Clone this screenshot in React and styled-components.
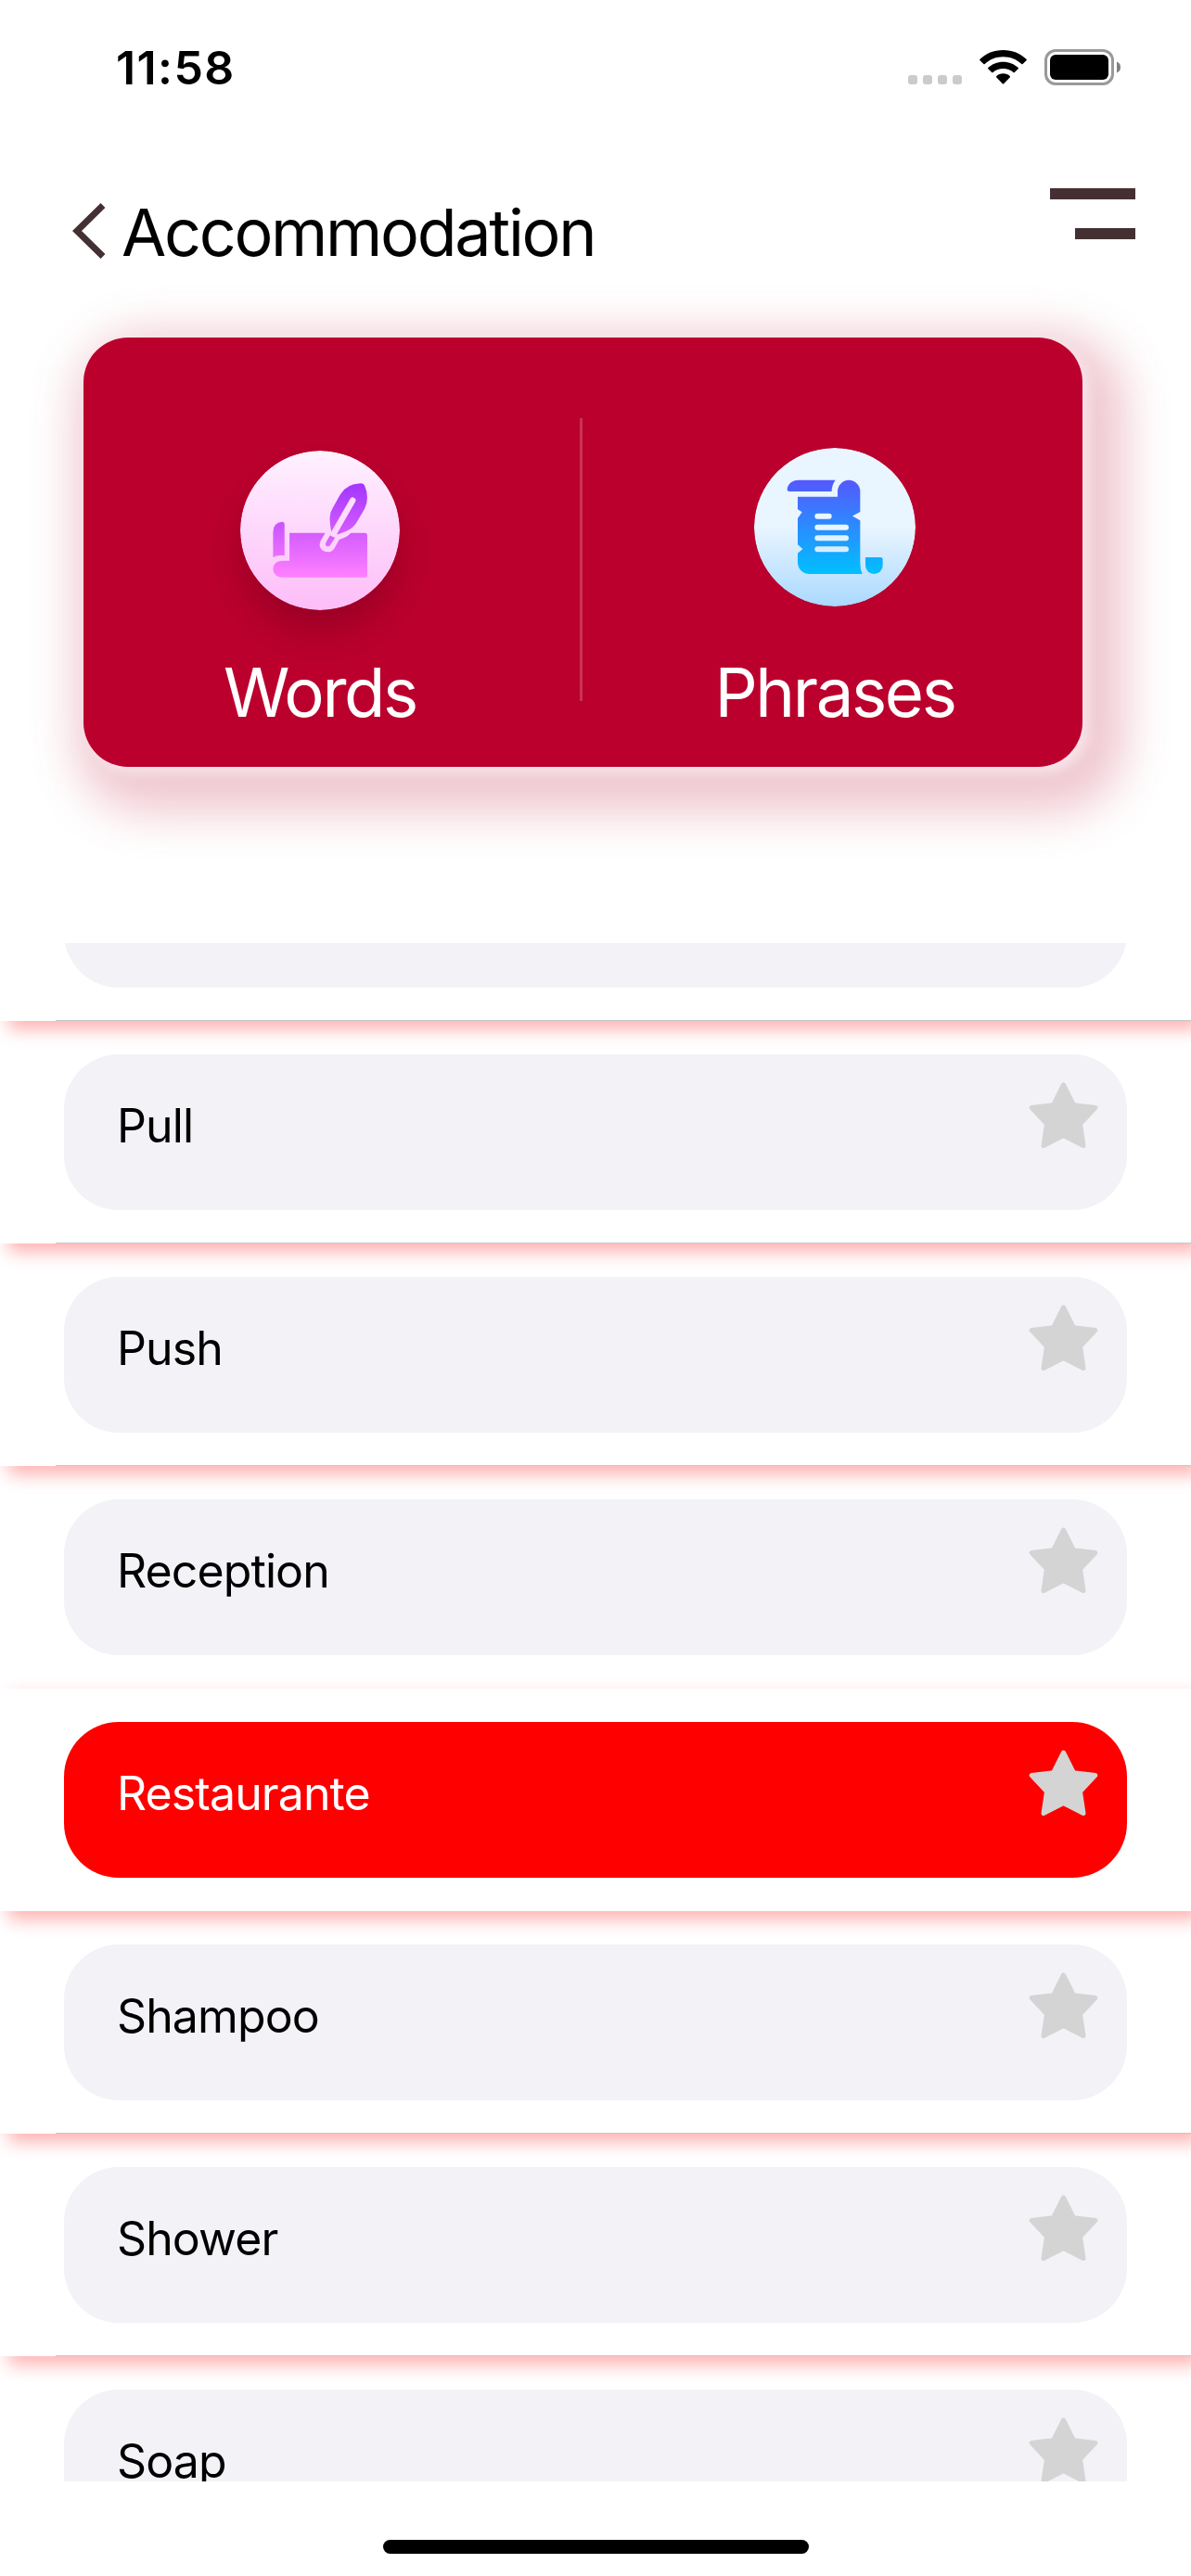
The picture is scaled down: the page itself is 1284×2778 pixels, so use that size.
import React from "react";
import styled, { createGlobalStyle } from "styled-components";

const GlobalStyle = createGlobalStyle`
  * { box-sizing: border-box; }
  body { margin: 0; background: #fff; }
`;

const Screen = styled.main`
  width: 1284px;
  height: 2778px;
  display: flex;
  flex-direction: column;
  overflow: hidden;
  background: #fff;
  color: #000;
  font-family: Inter, "Liberation Sans", sans-serif;
`;

const StatusBar = styled.header`
  height: 141px;
  display: flex;
  justify-content: space-between;
  align-items: flex-start;
  padding: 53px 76px 0 125px;
`;

const Clock = styled.time`
  font-size: 50px;
  font-weight: 600;
  line-height: 40px;
  letter-spacing: 1.4px;
`;

const StatusIcons = styled.div`
  display: flex;
  align-items: flex-start;
`;

const SignalDots = styled.div`
  display: flex;
  gap: 6px;
  padding-top: 28px;
  margin-right: 19px;
`;

const Dot = styled.span`
  width: 10px;
  height: 10px;
  border-radius: 3px;
  background: #cbcbcb;
`;

const WifiIcon = styled.svg`
  width: 51px;
  height: 38px;
  margin-right: 19px;
`;

const BatteryIcon = styled.svg`
  width: 82px;
  height: 39px;
`;

const NavBar = styled.nav`
  height: 223px;
  display: flex;
  align-items: flex-start;
  justify-content: space-between;
  padding: 61px 60px 0 78px;
`;

const BackButton = styled.button`
  display: flex;
  align-items: flex-start;
  gap: 17px;
  padding: 0;
  border: 0;
  background: none;
  color: inherit;
  font: inherit;
`;

const Chevron = styled.svg`
  width: 36px;
  height: 60px;
  margin-top: 17px;
`;

const Title = styled.span`
  font-size: 70px;
  line-height: 98px;
  letter-spacing: -2.3px;
`;

const MenuButton = styled.button`
  display: flex;
  flex-direction: column;
  align-items: flex-end;
  gap: 31px;
  padding: 1px 0 0;
  border: 0;
  background: none;
`;

const MenuBar = styled.span`
  width: ${(p) => p.$width}px;
  height: 12px;
  background: #443032;
`;

const SwitchCard = styled.section`
  width: 1077px;
  height: 463px;
  margin-left: 90px;
  flex-shrink: 0;
  display: flex;
  border-radius: 48px;
  background: #bb002d;
  box-shadow:
    7px 7px 14px rgba(255, 255, 255, 0.55),
    19px 22px 52px 26px rgba(187, 0, 45, 0.23);
`;

const Tile = styled.div`
  width: ${(p) => p.$width}px;
  padding-top: ${(p) => p.$top}px;
  display: flex;
  flex-direction: column;
  align-items: center;
`;

const TileIcon = styled.svg`
  width: ${(p) => p.$w}px;
  height: ${(p) => p.$h}px;
  border-radius: 50%;
  box-shadow: ${(p) => (p.$raised ? "0 24px 44px -4px rgba(0, 0, 0, 0.2)" : "none")};
`;

const TileLabel = styled.span`
  margin-top: ${(p) => p.$gap}px;
  font-size: 72.5px;
  line-height: 80px;
  letter-spacing: -2.4px;
  color: #fff;
`;

const Divider = styled.span`
  width: 3px;
  height: 305px;
  margin: 87px 7px 0 25px;
  background: rgba(255, 255, 255, 0.2);
`;

const ListViewport = styled.section`
  height: 1659px;
  margin-top: 190px;
  flex-shrink: 0;
  overflow: hidden;
`;

const List = styled.ul`
  list-style: none;
  margin: -156px 0 0;
  padding: 0;
  display: flex;
  flex-direction: column;
  isolation: isolate;
`;

const Row = styled.li`
  position: relative;
  z-index: ${(p) => p.$layer};
  height: 240px;
  flex-shrink: 0;
  padding: 36px 69px;
  background-color: #fff;
  background-image: ${(p) =>
    p.$separator ? "linear-gradient(#c6c6c8, #c6c6c8)" : "none"};
  background-repeat: no-repeat;
  background-position: 60px 239px;
  background-size: 1224px 1px;
  box-shadow: 9px 9px 18px rgba(255, 0, 0, 0.31);
`;

const Pill = styled.div`
  height: 168px;
  display: flex;
  justify-content: space-between;
  align-items: flex-start;
  padding: 30px 31.5px 0 57px;
  border-radius: 59px;
  background: ${(p) => (p.$selected ? "#ff0000" : "#f2f2f7")};
  color: ${(p) => (p.$selected ? "#fff" : "#000")};
`;

const Word = styled.span`
  margin-top: 17px;
  font-size: 50px;
  line-height: 60px;
  letter-spacing: -0.9px;
`;

const StarIcon = styled.svg`
  width: 75px;
  height: 72px;
`;

const HomeArea = styled.footer`
  flex: 1;
  display: flex;
  justify-content: center;
  padding-top: 63px;
`;

const HomeIndicator = styled.span`
  width: 459px;
  height: 15px;
  border-radius: 8px;
  background: #000;
`;

function Wifi() {
  return (
    <WifiIcon viewBox="0 0 51 38">
      <path d="M25.5 1C35.5 1 44.200 4.700 50.500 10.800Q51.200 11.500 50.500 12.200L46.600 16Q46 16.600 45.300 16C40 11 33 8.300 25.500 8.300S11 11 5.700 16Q5 16.600 4.400 16L.5 12.200Q-.2 11.500 .5 10.800C6.800 4.700 15.500 1 25.500 1Z" />
      <path d="M25.500 13.700C32 13.700 37.500 16 41.700 20Q42.300 20.700 41.700 21.300L37.800 25.100Q37.200 25.700 36.500 25.100C33.500 22.500 29.700 21 25.500 21S17.500 22.500 14.500 25.100Q13.800 25.700 13.200 25.100L9.300 21.300Q8.700 20.700 9.300 20C13.500 16 19 13.700 25.500 13.700Z" />
      <path d="M25.500 26.300C28.400 26.300 30.800 27.300 32.700 29Q33.300 29.700 32.700 30.400L26.200 37.200Q25.500 37.900 24.800 37.200L18.300 30.400Q17.700 29.700 18.300 29C20.200 27.300 22.600 26.300 25.500 26.300Z" />
    </WifiIcon>
  );
}

function Battery() {
  return (
    <BatteryIcon viewBox="0 0 82 39">
      <rect x="1.500" y="1.500" width="72" height="36" rx="10.500" fill="none" stroke="#999" strokeWidth="3" />
      <rect x="6" y="6" width="63" height="27" rx="6" />
      <path d="M78 13.500Q82 15 82 19.500T78 25.500Z" fill="#808080" />
    </BatteryIcon>
  );
}

function QuillIcon() {
  return (
    <TileIcon $w={172} $h={172} $raised viewBox="57 47 515 516" preserveAspectRatio="none">
      <defs>
        <linearGradient id="quillBg" x1="0" y1="0" x2="0" y2="1">
          <stop offset="0" stopColor="#fff1ff" />
          <stop offset="1" stopColor="#fdbdf8" />
        </linearGradient>
        <linearGradient id="quillInk" gradientUnits="userSpaceOnUse" x1="0" y1="153" x2="0" y2="457">
          <stop offset="0" stopColor="#a335ff" />
          <stop offset="1" stopColor="#ff80ff" />
        </linearGradient>
        <mask id="paperCut" maskUnits="userSpaceOnUse" x="57" y="47" width="515" height="516">
          <rect x="57" y="47" width="515" height="516" fill="#fff" />
          <path d="M336 305L317 338C306 358 322 375 340 375Q354 375 362 361L376 336Q382 332 394 328Q408 323 420 305Z" fill="#000" />
        </mask>
        <mask id="shaftCut" maskUnits="userSpaceOnUse" x="57" y="47" width="515" height="516">
          <rect x="57" y="47" width="515" height="516" fill="#fff" />
          <path d="M420 208L357 318" stroke="#000" strokeWidth="19" strokeLinecap="round" />
        </mask>
      </defs>
      <ellipse cx="314.500" cy="305" rx="257.500" ry="258" fill="url(#quillBg)" />
      <g fill="url(#quillInk)">
        <path d="M200 285Q200 277 192 277Q163 280 163 310V392Q172 386 186 386H200Z" />
        <path
          mask="url(#paperCut)"
          d="M216 313H459Q467 313 467 321V449Q467 457 459 457H190A27 27 0 0 1 190 403H216Z"
        />
        <path
          mask="url(#shaftCut)"
          d="M445 153Q454 152 458 159Q467 178 467 200Q467 220 458 236L433 279Q421 299 400 307L373 318L352 313Q346 285 346 266Q346 248 355 234L379 190Q400 154 445 153Z"
        />
        <path d="M347 321L334 343C330 352 334 357 340 357Q345 357 348 352L363 328Q354 327 347 321Z" />
      </g>
    </TileIcon>
  );
}

function ScrollIcon() {
  return (
    <TileIcon $w={174} $h={171} viewBox="69 69 522 513" preserveAspectRatio="none">
      <defs>
        <linearGradient id="scrollBg" x1="0" y1="0" x2="0" y2="1">
          <stop offset="0" stopColor="#e9f5ff" />
          <stop offset="0.5" stopColor="#e9f5ff" />
          <stop offset="1" stopColor="#aad9ff" />
        </linearGradient>
        <linearGradient id="scrollInk" gradientUnits="userSpaceOnUse" x1="0" y1="173" x2="0" y2="477">
          <stop offset="0" stopColor="#5558ff" />
          <stop offset="1" stopColor="#00c0ff" />
        </linearGradient>
        <mask id="linesCut" maskUnits="userSpaceOnUse" x="69" y="69" width="522" height="513">
          <rect x="69" y="69" width="522" height="513" fill="#fff" />
          <rect x="265" y="281" width="55" height="18" rx="9" />
          <rect x="265" y="317" width="110" height="18" rx="9" />
          <rect x="265" y="352" width="110" height="18" rx="9" />
          <rect x="265" y="388" width="110" height="18" rx="9" />
        </mask>
      </defs>
      <ellipse cx="330" cy="325.500" rx="261" ry="256.500" fill="url(#scrollBg)" />
      <g fill="url(#scrollInk)">
        <path d="M212 173H332Q320 188 320 210H183Q176 210 176 202C178 186 192 173 212 173Z" />
        <path
          mask="url(#linesCut)"
          d="M339 227V210A36.500 36.500 0 0 1 412 210V276L387 289.500L412 304V440Q412 462 419 477H248A38 38 0 0 1 210 440V410L226 396L210 382V297L224 277L210 268V227Z"
        />
        <path d="M429 423H478Q485 423 485 430V449A28 28 0 0 1 429 449Z" />
      </g>
    </TileIcon>
  );
}

function Star() {
  return (
    <StarIcon viewBox="0 0 75 72">
      <path
        d="M37.500 3L48.500 24.800L71.800 27.600L55.500 45L59 68.600L37.500 57.600L16 68.600L19.500 45L3.200 27.600L26.500 24.800Z"
        fill="#d4d4d4"
        stroke="#d4d4d4"
        strokeWidth="5"
        strokeLinejoin="round"
      />
    </StarIcon>
  );
}

const words = [
  { label: "" },
  { label: "Pull" },
  { label: "Push" },
  { label: "Reception", separator: false },
  { label: "Restaurante", selected: true, separator: false },
  { label: "Shampoo" },
  { label: "Shower" },
  { label: "Soap" },
];

export default function App() {
  return (
    <>
      <GlobalStyle />
      <Screen>
        <StatusBar>
          <Clock>11:58</Clock>
          <StatusIcons>
            <SignalDots>
              <Dot />
              <Dot />
              <Dot />
              <Dot />
            </SignalDots>
            <Wifi />
            <Battery />
          </StatusIcons>
        </StatusBar>
        <NavBar>
          <BackButton>
            <Chevron viewBox="0 0 36 60">
              <path d="M33 2.500L5 30L33 57.500" fill="none" stroke="#443032" strokeWidth="7" />
            </Chevron>
            <Title>Accommodation</Title>
          </BackButton>
          <MenuButton aria-label="Menu">
            <MenuBar $width={92} />
            <MenuBar $width={65} />
          </MenuButton>
        </NavBar>
        <SwitchCard>
          <Tile $width={510} $top={122}>
            <QuillIcon />
            <TileLabel $gap={49}>Words</TileLabel>
          </Tile>
          <Divider />
          <Tile $width={530} $top={119}>
            <ScrollIcon />
            <TileLabel $gap={53}>Phrases</TileLabel>
          </Tile>
        </SwitchCard>
        <ListViewport>
          <List>
            {words.map(({ label, selected, separator = true }, i) => (
              <Row key={i} $layer={selected ? words.length + 1 : words.length - i} $separator={separator}>
                <Pill $selected={selected}>
                  <Word>{label}</Word>
                  <Star />
                </Pill>
              </Row>
            ))}
          </List>
        </ListViewport>
        <HomeArea>
          <HomeIndicator />
        </HomeArea>
      </Screen>
    </>
  );
}
